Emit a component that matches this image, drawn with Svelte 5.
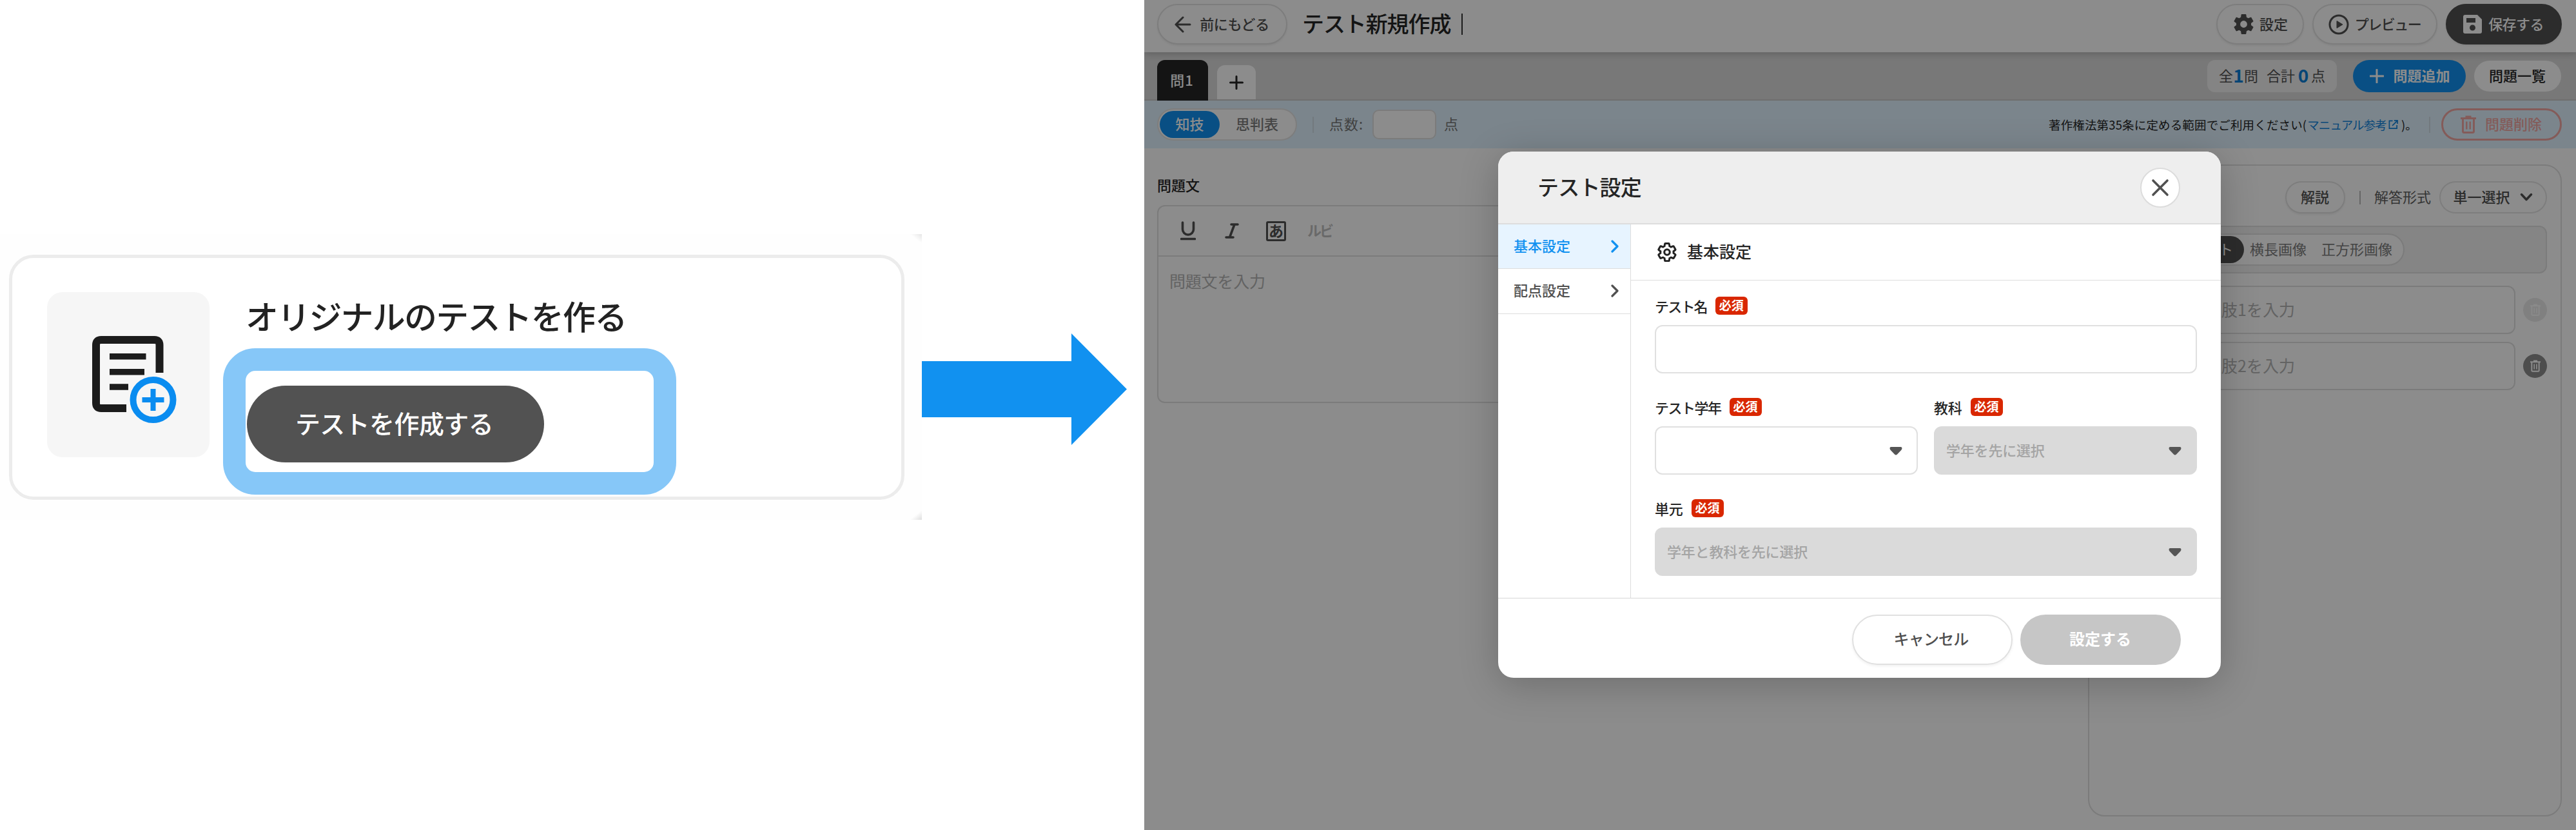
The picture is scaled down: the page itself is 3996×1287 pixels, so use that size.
<script>
  const cog =
    'M19.43 12.98c.04-.32.07-.64.07-.98 0-.34-.03-.66-.07-.98l2.11-1.65c.19-.15.24-.42.12-.64l-2-3.46c-.09-.16-.26-.25-.44-.25-.06 0-.12.01-.17.03l-2.49 1c-.52-.4-1.08-.73-1.69-.98l-.38-2.65C14.46 2.18 14.25 2 14 2h-4c-.25 0-.46.18-.49.42l-.38 2.65c-.61.25-1.17.59-1.69.98l-2.49-1c-.06-.02-.12-.03-.18-.03-.17 0-.34.09-.43.25l-2 3.46c-.13.22-.07.49.12.64l2.11 1.65c-.04.32-.07.65-.07.98 0 .33.03.66.07.98l-2.11 1.65c-.19.15-.24.42-.12.64l2 3.46c.09.16.26.25.44.25.06 0 .12-.01.17-.03l2.49-1c.52.4 1.08.73 1.69.98l.38 2.65c.03.24.24.42.49.42h4c.25 0 .46-.18.49-.42l.38-2.65c.61-.25 1.17-.59 1.69-.98l2.49 1c.06.02.12.03.18.03.17 0 .34-.09.43-.25l2-3.46c.12-.22.07-.49-.12-.64l-2.11-1.65z';
  const choices = [
    { label: '選択肢1を入力', locked: true },
    { label: '選択肢2を入力', locked: false }
  ];
</script>

{#snippet trash()}
  <svg class="trash" viewBox="0 0 24 28" fill="none" stroke="currentColor">
    <path d="M0 4.5h24M7.5 2h9" stroke-width="3" />
    <path d="M3.5 5v19.5q0 2 2 2h13q2 0 2-2V5" stroke-width="3" />
    <path d="M9.3 9.5v12M14.7 9.5v12" stroke-width="2.4" />
  </svg>
{/snippet}

{#snippet caret()}
  <svg class="caret" viewBox="0 0 20 13"><path d="M2.5 0h15q2 0 2 2t-1.5 3.300l-6 6.200q-2 1.800-4 0l-6-6.200Q.5 3.800.5 2t2-2z" fill="#555" /></svg>
{/snippet}

{#snippet chevron()}
  <svg class="chev" viewBox="0 0 12 20"><path d="M2 2l8 8-8 8" fill="none" stroke="currentColor" stroke-width="3.2" stroke-linecap="round" stroke-linejoin="round" /></svg>
{/snippet}

<main class="page">
  <section class="guide">
    <div class="shot">
      <div class="card">
        <div class="thumb">
          <svg viewBox="0 0 140 140" fill="none">
            <path d="M109.500 60V17q0-8-8-8H19q-8 0-8 8v90q0 8 8 8h39" stroke="#1c1c1c" stroke-width="12" />
            <path d="M32 34.700h56.500M32 58.700h54M32 82h29" stroke="#1c1c1c" stroke-width="9.500" />
            <circle cx="99.500" cy="102" r="31" stroke="#0a8cf0" stroke-width="10" />
            <path d="M99.500 85v34M82.500 102h34" stroke="#0a8cf0" stroke-width="8" />
          </svg>
        </div>
        <div class="make">
          <h2>オリジナルのテストを作る</h2>
          <div class="ring"><button>テストを作成する</button></div>
        </div>
      </div>
      <i class="nick top"></i>
      <i class="nick bottom"></i>
    </div>
  </section>

  <svg class="arrow" viewBox="0 0 318 173"><path d="M0 43h232V0l86 86.500-86 86.500v-43H0z" fill="#1191f0" /></svg>

  <section class="app">
    <header class="bar">
      <button class="pill back">
        <svg viewBox="0 0 26 26" width="26" height="26"><path d="M24 13H2M13 2L2 13l11 11" fill="none" stroke="currentColor" stroke-width="3" stroke-linecap="round" stroke-linejoin="round" /></svg>
        <span>前にもどる</span>
      </button>
      <h1>テスト新規作成</h1>
      <i class="cursor"></i>
      <div class="actions">
        <button class="pill conf">
          <svg viewBox="0 0 24 24" width="37" height="37"><path fill-rule="evenodd" fill="currentColor" d="{cog}M12 8.500a3.500 3.500 0 1 0 0 7 3.500 3.500 0 0 0 0-7z" /></svg>
          <span>設定</span>
        </button>
        <button class="pill prev">
          <svg viewBox="0 0 32 32" width="32" height="32"><circle cx="16" cy="16" r="14" fill="none" stroke="currentColor" stroke-width="3" /><path d="M13 10.500l9 5.500-9 5.500z" fill="currentColor" stroke="currentColor" stroke-linejoin="round" /></svg>
          <span>プレビュー</span>
        </button>
        <button class="pill save">
          <svg viewBox="0 0 29 29" width="29" height="29"><path fill-rule="evenodd" fill="currentColor" d="M3 0h19l7 7v19q0 3-3 3H3q-3 0-3-3V3q0-3 3-3zM5 5v7h14V5zM14.500 15.500a4.500 4.500 0 1 0 0 9 4.500 4.500 0 0 0 0-9z" /></svg>
          <span>保存する</span>
        </button>
      </div>
    </header>

    <nav class="tabs">
      <div class="tab on">問1</div>
      <div class="tab add"><svg viewBox="0 0 22 22" width="22" height="22"><path d="M11 1.500v19M1.500 11h19" stroke="currentColor" stroke-width="3" stroke-linecap="round" /></svg></div>
      <div class="summary">
        <p class="count"><span>全</span><b>1</b><span>問</span><span class="sum">合計</span><b class="zero">0</b><span>点</span></p>
        <button class="addq"><svg viewBox="0 0 22 22" width="22" height="22"><path d="M11 1v20M1 11h20" stroke="currentColor" stroke-width="3" stroke-linecap="round" /></svg>問題追加</button>
        <button class="list">問題一覧</button>
      </div>
    </nav>

    <div class="meta">
      <div class="switch"><span class="on">知技</span><span>思判表</span></div>
      <i class="rule"></i>
      <span class="pt">点数:</span>
      <div class="score"></div>
      <span class="unit">点</span>
      <p class="notice">
        <span class="law">著作権法第35条に定める範囲でご利用ください(</span><a class="link" href="#manual">マニュアル参考</a><svg viewBox="0 0 16 16" width="15" height="16" fill="none" stroke="#1183dd" stroke-width="1.800"><path d="M7 2H1.500v12.500H14V9M9.500 1.500H15V7M15 1.500L6.500 10" /></svg><span class="end">)。</span>
      </p>
      <i class="rule r2"></i>
      <button class="remove">{@render trash()}問題削除</button>
    </div>

    <div class="work">
      <div class="question">
        <h3>問題文</h3>
        <div class="editor">
          <div class="tools">
            <svg viewBox="0 0 24 30" width="24" height="30"><path d="M3.500 2v10.500a8 8 0 0 0 17 0V2M1.500 27.500h21" fill="none" stroke="#505050" stroke-width="3.600" stroke-linecap="round" /></svg>
            <svg class="ital" viewBox="0 0 22 24" width="22" height="24"><path d="M10 2h10M2 22h11M15 2L7.500 22" fill="none" stroke="#505050" stroke-width="3.600" stroke-linecap="round" /></svg>
            <span class="kana">あ</span>
            <span class="ruby">ルビ</span>
          </div>
          <p>問題文を入力</p>
        </div>
      </div>

      <aside class="answer">
        <div class="head">
          <button class="pill exp">解説</button>
          <i class="bar2"></i>
          <span class="fmt">解答形式</span>
          <button class="pill type">単一選択<svg viewBox="0 0 20 14" width="20" height="14"><path d="M2.500 2.500L10 10.500l7.500-8" fill="none" stroke="currentColor" stroke-width="3.500" stroke-linecap="round" stroke-linejoin="round" /></svg></button>
        </div>
        <div class="group">
          <div class="modes"><span class="on">テキスト</span><span class="wide">横長画像</span><span class="sq">正方形画像</span></div>
        </div>
        {#each choices as c}
          <div class="choice">
            <div class="field">{c.label}</div>
            <div class="bin" class:locked={c.locked}>{@render trash()}</div>
          </div>
        {/each}
      </aside>
    </div>

    <div class="veil"></div>

    <div class="dialog">
      <div class="dhead">
        <h2>テスト設定</h2>
        <button class="close"><svg viewBox="0 0 28 28" width="28" height="28"><path d="M3 3l22 22M25 3L3 25" stroke="#505050" stroke-width="3.600" stroke-linecap="round" /></svg></button>
      </div>
      <div class="dbody">
        <ul class="side">
          <li class="on"><span>基本設定</span>{@render chevron()}</li>
          <li><span>配点設定</span>{@render chevron()}</li>
        </ul>
        <div class="form">
          <div class="sect">
            <svg viewBox="0 0 24 24" width="34" height="34"><path d={cog} transform="translate(.5 .6) scale(.955)" fill="none" stroke="#222" stroke-width="2.200" /><circle cx="12" cy="12" r="3" fill="none" stroke="#222" stroke-width="2.200" /></svg>
            <h3>基本設定</h3>
          </div>
          <div class="rows">
            <div class="row">
              <label for="name"><span class="k3">テスト名</span><em>必須</em></label>
              <div class="input"></div>
            </div>
            <div class="row pair">
              <div>
                <label for="grade"><span class="k4">テスト学年</span><em>必須</em></label>
                <div class="input select">{@render caret()}</div>
              </div>
              <div>
                <label for="subject"><span>教科</span><em>必須</em></label>
                <div class="input select off"><span>学年を先に選択</span>{@render caret()}</div>
              </div>
            </div>
            <div class="row">
              <label for="unit"><span>単元</span><em>必須</em></label>
              <div class="input select off"><span>学年と教科を先に選択</span>{@render caret()}</div>
            </div>
          </div>
        </div>
      </div>
      <div class="dfoot">
        <button class="cancel">キャンセル</button>
        <button class="ok">設定する</button>
      </div>
    </div>
  </section>
</main>

<style>
  :global(body) { margin: 0; background: #fff; }
  .page, .page * { box-sizing: border-box; }
  .page {
    display: flex;
    width: 3996px;
    height: 1287px;
    overflow: hidden;
    font-family: 'Noto Sans CJK JP', sans-serif;
    font-size: 22px;
    line-height: 1;
    color: #252525;
    white-space: nowrap;
  }
  h1, h2, h3, p, ul { margin: 0; padding: 0; font-weight: 500; }
  ul { list-style: none; }
  svg { display: block; flex: none; }
  i { display: block; flex: none; }
  button {
    display: flex;
    align-items: center;
    justify-content: center;
    padding: 0 1px 4px 0;
    border: 0;
    background: none;
    color: inherit;
    font: inherit;
    font-weight: 500;
    flex: none;
  }
  button svg { margin-top: 4px; }

  /* guide card */
  .guide { flex: 0 0 1430px; padding-top: 363px; }
  .shot { position: relative; height: 443px; padding: 32px 27px 31px 14px; background: #fefefe; overflow: hidden; }
  .card { display: flex; height: 380px; padding: 53px 0 0 54px; border: 5px solid #ececec; border-radius: 38px; background: #fff; }
  .thumb { width: 252px; height: 256px; padding: 65px 0 0 65px; border-radius: 24px; background: #f6f6f6; }
  .thumb svg { width: 140px; height: 140px; }
  .make { margin-left: 21px; }
  .make h2 { height: 87px; padding: 11px 0 0 35px; font-size: 51px; letter-spacing: -1.800px; color: #222; }
  .ring { width: 703px; height: 227px; padding: 23px 0 0 2px; border: 35px solid #86c7f8; border-radius: 50px; background: #fff; }
  .ring button { width: 461px; height: 119px; padding-right: 4px; border-radius: 60px; background: #525252; color: #fff; font-size: 39px; letter-spacing: -.6px; }
  .nick { position: absolute; right: 0; width: 19px; height: 15px; }
  .nick.top { top: 0; background: linear-gradient(to top right, transparent 50%, #e6e6e6); }
  .nick.bottom { bottom: 0; background: linear-gradient(to bottom right, transparent 50%, #dedede); }
  .arrow { width: 318px; height: 173px; margin: 517px 27px 0 0; }

  /* editor screen */
  .app { position: relative; flex: 0 0 2221px; height: 1287px; background: #fff; overflow: hidden; }
  .pill { border: 2px solid #e4e4e4; border-radius: 40px; background: #fff; color: #505050; box-shadow: 0 2px 3px rgba(0, 0, 0, .06); }
  .bar { position: relative; display: flex; align-items: center; height: 81px; padding: 0 22px 6px 20px; box-shadow: 0 2px 10px rgba(0, 0, 0, .22); }
  .bar .pill { height: 63px; }
  .back { width: 202px; gap: 13px; }
  .back span { letter-spacing: -.4px; }
  h1 { margin-left: 23px; padding-bottom: 4px; width: 233px; font-size: 34px; letter-spacing: -1.100px; }
  .cursor { width: 2px; height: 33px; margin-left: 14px; background: #333; }
  .actions { display: flex; gap: 13px; margin-left: auto; }
  .conf { width: 136px; gap: 6px; }
  .prev { width: 194px; gap: 9px; }
  .prev span { letter-spacing: -1.500px; }
  .pill.save { width: 180px; gap: 10px; border-color: #505050; background: #505050; color: #fff; }
  .save span { letter-spacing: -.6px; }

  .tabs { display: flex; align-items: flex-end; height: 75px; padding: 0 23px 0 20px; background: #dadada; border-bottom: 2px solid #c8c8c8; }
  .tab { display: flex; align-items: center; justify-content: center; border-radius: 12px 12px 0 0; }
  .tab.on { width: 79px; height: 63px; margin-bottom: -2px; padding: 0 2px 4px 0; background: #252525; color: #fff; font-weight: 500; letter-spacing: 1px; }
  .tab.add { width: 60px; height: 53px; margin-left: 14px; background: #fff; }
  .summary { display: flex; align-items: center; height: 50px; margin: 0 0 11px auto; font-weight: 500; }
  .count { display: flex; align-items: center; width: 201px; height: 50px; padding: 0 0 4px 18px; border-radius: 12px; background: #f0f0f0; color: #505050; font-weight: 400; }
  .count b { width: 17px; font-size: 28px; text-align: center; color: #0a7fd6; }
  .count .sum { margin-left: 13px; }
  .count .zero { width: 20px; margin: 0 2px 0 3px; }
  .addq { width: 175px; height: 50px; margin-left: 25px; gap: 14px; border-radius: 25px; background: #1191f0; color: #fff; }
  .summary .addq { padding-left: 3px; font-weight: 700; }
  .list { width: 135px; height: 48px; margin-left: 13px; border-radius: 24px; background: #fff; }

  .meta { display: flex; align-items: center; height: 74px; padding: 0 22px 0 20px; background: #e0f3ff; color: #777; }
  .switch { display: flex; align-items: center; width: 217px; height: 50px; padding: 0 2px; border: 2px solid #e4e4e4; border-radius: 25px; background: #fff; color: #7d7d7d; font-weight: 500; }
  .switch .on { width: 93px; height: 42px; line-height: 38px; border-radius: 21px; background: #1191f0; color: #fff; text-align: center; }
  .switch span + span { margin-left: 25px; padding-bottom: 4px; }
  .rule { width: 2px; height: 25px; margin-left: 24px; background: #cfdde6; }
  .pt { width: 67px; margin-left: 24px; padding-bottom: 4px; letter-spacing: 1px; }
  .score { width: 99px; height: 46px; border: 2px solid #e0e0e0; border-radius: 10px; background: #fff; }
  .unit { margin-left: 12px; padding-bottom: 4px; }
  .notice { display: flex; align-items: center; width: 567px; margin-left: auto; font-size: 18.500px; color: #252525; font-weight: 400; }
  .law { letter-spacing: .15px; }
  .notice .link { margin-left: 1px; color: #1183dd; letter-spacing: -.9px; text-decoration: none; }
  .notice svg { margin-left: 3px; }
  .end { margin-left: 5px; }
  .r2 { margin-left: 23px; }
  .remove { width: 187px; height: 50px; margin-left: 17px; gap: 14px; border: 3px solid #f0a6a2; border-radius: 25px; color: #f0a6a2; }
  .remove .trash { width: 24px; height: 28px; }

  .work { display: flex; justify-content: space-between; padding: 25px 22px 0 20px; }
  .question { width: 1410px; padding-top: 20px; }
  .question h3 { height: 43px; font-size: 22px; font-weight: 500; }
  .editor { height: 307px; border: 2px solid #e0e0e0; border-radius: 12px; }
  .tools { display: flex; align-items: center; height: 78px; padding: 0 0 0 34px; border-bottom: 2px solid #e0e0e0; }
  .ital { margin-left: 45px; }
  .kana { display: flex; align-items: center; justify-content: center; width: 31px; height: 31px; margin-left: 42px; padding-bottom: 2px; border: 3px solid #505050; border-radius: 3px; font-size: 23px; font-weight: 700; color: #505050; }
  .ruby { margin-left: 33px; padding-bottom: 4px; font-size: 22px; letter-spacing: -3px; font-weight: 700; color: #c0c0c0; }
  .editor p { padding: 25px 0 0 17px; font-size: 25px; font-weight: 400; letter-spacing: -.2px; color: #b4b4b4; }

  .answer { width: 735px; height: 1011px; padding: 24px 21px; border: 2px solid #e0e0e0; border-radius: 26px; }
  .head { display: flex; align-items: center; justify-content: flex-end; height: 50px; }
  .head .pill { height: 50px; }
  .exp { width: 93px; }
  .bar2 { width: 2px; height: 21px; margin-left: 22px; background: #bbb; }
  .fmt { width: 88px; margin-left: 21px; padding-bottom: 4px; color: #606060; }
  .type { width: 167px; margin-left: 13px; gap: 15px; box-shadow: none; }
  .group { display: flex; align-items: center; height: 74px; margin-top: 19px; padding-left: 17px; border: 2px solid #e0e0e0; border-radius: 12px; background: #f2f2f2; }
  .modes { display: flex; align-items: center; width: 449px; height: 50px; padding-left: 3px; border: 2px solid #e0e0e0; border-radius: 25px; background: #fff; color: #7d7d7d; }
  .modes span { padding-bottom: 4px; }
  .modes .on { width: 195px; height: 42px; padding: 0 17px 0 0; line-height: 38px; border-radius: 21px; background: #505050; color: #fff; text-align: right; }
  .wide { margin-left: 9px; }
  .sq { margin-left: 23px; }
  .choice { display: flex; align-items: center; justify-content: space-between; margin-top: 12px; }
  .group + .choice { margin-top: 19px; }
  .field { display: flex; align-items: center; width: 599px; height: 75px; margin-left: 41px; padding: 0 0 3px 91px; border: 2px solid #e0e0e0; border-radius: 12px; font-size: 25px; color: #b4b4b4; }
  .bin { display: flex; align-items: center; justify-content: center; width: 37px; height: 37px; border-radius: 50%; background: #8c8c8c; color: #fff; }
  .bin .trash { width: 16px; height: 19px; }
  .bin.locked { background: #eaeaea; color: #fbfbfb; }

  .veil { position: absolute; inset: 0; background: rgba(0, 0, 0, .45); }

  /* settings dialog */
  .dialog { position: absolute; left: 549px; top: 235px; width: 1121px; height: 816px; border-radius: 24px; background: #fff; overflow: hidden; box-shadow: 0 10px 60px rgba(0, 0, 0, .22); }
  .dhead { display: flex; align-items: center; justify-content: space-between; height: 113px; padding: 0 63px 0 61px; background: #eee; border-bottom: 2px solid #ddd; }
  .dhead h2 { padding-bottom: 2px; font-size: 33px; letter-spacing: -.8px; }
  .close { width: 62px; height: 62px; padding: 0; border: 2px solid #dcdcdc; border-radius: 50%; background: #fff; }
  .close svg { margin: 0; }
  .dbody { display: flex; height: 579px; }
  .side { width: 206px; border-right: 1px solid #ddd; }
  .side li { display: flex; align-items: center; justify-content: space-between; height: 70px; padding: 0 18px 1px 24px; border-bottom: 1px solid #ddd; font-weight: 500; color: #505050; }
  .side li span { padding-bottom: 4px; }
  .side .on { background: #e7f4ff; color: #1191f0; height: 69px; }
  .chev { width: 12px; height: 20px; }
  .form { flex: 1; }
  .sect { display: flex; align-items: center; height: 87px; padding: 0 0 1px 39px; border-bottom: 1px solid #ddd; gap: 14px; }
  .sect h3 { padding-bottom: 2px; font-size: 25px; }
  .rows { padding: 25px 37px 0; }
  .row { height: 157px; }
  .pair { display: grid; grid-template-columns: 408px 408px; gap: 25px; }
  label { display: flex; align-items: center; gap: 13px; height: 28px; font-weight: 500; }
  label span { letter-spacing: -.2px; }
  label .k3 { letter-spacing: -1.800px; }
  label .k4 { letter-spacing: -1.500px; }
  label em { width: 50px; height: 28px; line-height: 26px; border-radius: 6px; background: #d92700; color: #fff; font-size: 19px; font-style: normal; font-weight: 700; text-align: center; }
  .input { display: flex; align-items: center; height: 75px; margin-top: 16px; padding: 0 22px 0 17px; border: 2px solid #e0e0e0; border-radius: 12px; }
  .input span { padding-bottom: 4px; letter-spacing: -.2px; }
  .off { border-color: #dadada; background: #dadada; color: #a4a4a4; font-weight: 500; }
  .caret { width: 20px; height: 13px; margin: 2px 0 0 auto; }
  .dfoot { display: flex; justify-content: flex-end; gap: 12px; height: 124px; padding: 25px 62px 0; border-top: 1px solid #d8d8d8; font-size: 24px; }
  .cancel { width: 249px; height: 78px; border: 2px solid #e0e0e0; border-radius: 39px; color: #505050; box-shadow: 0 2px 4px rgba(0, 0, 0, .06); letter-spacing: -.8px; padding-right: 4px; }
  .ok { width: 249px; height: 78px; border-radius: 39px; background: #c6c6c6; color: #fff; }
  .dfoot .ok { font-weight: 700; }
</style>
